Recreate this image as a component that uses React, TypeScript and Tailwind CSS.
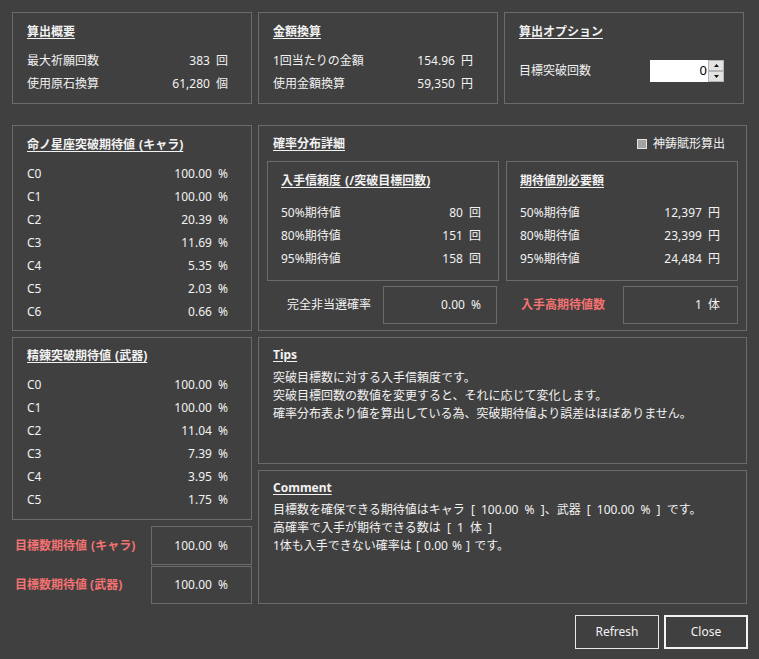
import React from "react";

const FONT = { fontFamily: '"Noto Sans", "Noto Sans CJK JP", sans-serif' };

function Title({ children }: { children: React.ReactNode }) {
  return (
    <div className="h-[16px] leading-[16px] font-bold underline underline-offset-2 decoration-1 whitespace-nowrap [word-spacing:1px]">
      {children}
    </div>
  );
}

function Row({ label, value, red }: { label: string; value: string; red?: boolean }) {
  return (
    <div className="flex h-[23px] items-center justify-between whitespace-nowrap">
      <span className={red ? "text-[#f47272]" : ""}>{label}</span>
      <span>{value}</span>
    </div>
  );
}

const box = "border border-[#6b6b6b]";

export default function App() {
  const chara = [
    ["C0", "100.00 %"],
    ["C1", "100.00 %"],
    ["C2", "20.39 %"],
    ["C3", "11.69 %"],
    ["C4", "5.35 %"],
    ["C5", "2.03 %"],
    ["C6", "0.66 %"],
  ];
  const weapon = [
    ["C0", "100.00 %"],
    ["C1", "100.00 %"],
    ["C2", "11.04 %"],
    ["C3", "7.39 %"],
    ["C4", "3.95 %"],
    ["C5", "1.75 %"],
  ];
  return (
    <div
      className="w-[759px] h-[659px] bg-[#404040] text-[#f2f2f2] text-[12px] leading-[16px] [word-spacing:3px] pl-[12px] pt-[12px] overflow-hidden"
      style={FONT}
    >
      {/* Row 1 */}
      <div className="flex gap-[6px]">
        <div className={`${box} w-[240px] h-[92px] pt-[11px] pl-[14px] pr-[23px]`}>
          <Title>算出概要</Title>
          <div className="mt-[9px]">
            <Row label="最大祈願回数" value="383 回" />
            <Row label="使用原石換算" value="61,280 個" />
          </div>
        </div>
        <div className={`${box} w-[240px] h-[92px] pt-[11px] pl-[14px] pr-[24px]`}>
          <Title>金額換算</Title>
          <div className="mt-[9px]">
            <Row label="1回当たりの金額" value="154.96 円" />
            <Row label="使用金額換算" value="59,350 円" />
          </div>
        </div>
        <div className={`${box} w-[240px] h-[92px] pt-[11px] pl-[14px] pr-[19px]`}>
          <Title>算出オプション</Title>
          <div className="mt-[20px] flex h-[22px] items-center justify-between">
            <span>目標突破回数</span>
            <div className="flex h-[22px] w-[74px] bg-white">
              <div className="flex-1 text-right text-black leading-[20px] text-[13px] pr-[1px]">0</div>
              <div className="flex w-[16px] flex-col">
                <div className="flex h-[11px] items-center justify-center border border-[#b5b5b5] bg-[#e3e3e3]">
                  <svg width="5" height="3" viewBox="0 0 5 3"><path d="M0 3 L2.5 0 L5 3 Z" fill="#111" /></svg>
                </div>
                <div className="flex h-[11px] items-center justify-center border border-[#b5b5b5] bg-[#e3e3e3]">
                  <svg width="5" height="3" viewBox="0 0 5 3"><path d="M0 0 L2.5 3 L5 0 Z" fill="#111" /></svg>
                </div>
              </div>
            </div>
          </div>
        </div>
      </div>

      {/* Row 2 */}
      <div className="mt-[21px] flex gap-[6px]">
        {/* Left column */}
        <div className="flex w-[240px] flex-col">
          <div className={`${box} h-[206px] pt-[11px] pl-[14px] pr-[23px]`}>
            <Title>命ノ星座突破期待値 (キャラ)</Title>
            <div className="mt-[9px]">
              {chara.map(([l, v]) => (
                <Row key={l} label={l} value={v} />
              ))}
            </div>
          </div>
          <div className={`${box} mt-[6px] h-[183px] pt-[10px] pl-[14px] pr-[23px]`}>
            <Title>精錬突破期待値 (武器)</Title>
            <div className="mt-[9px]">
              {weapon.map(([l, v]) => (
                <Row key={l} label={l} value={v} />
              ))}
            </div>
          </div>
          <div className="mt-[6px] flex h-[39px] items-center">
            <span className="w-[139px] pl-[3px] font-bold text-[#f47272] whitespace-nowrap [word-spacing:1px]">目標数期待値 (キャラ)</span>
            <div className={`${box} flex h-[39px] flex-1 items-center justify-end pr-[23px]`}>100.00 %</div>
          </div>
          <div className="mt-[1px] flex h-[38px] items-center">
            <span className="w-[139px] pl-[3px] font-bold text-[#f47272] whitespace-nowrap [word-spacing:0px]">目標数期待値 (武器)</span>
            <div className={`${box} flex h-[38px] flex-1 items-center justify-end pr-[23px]`}>100.00 %</div>
          </div>
        </div>

        {/* Right column */}
        <div className="flex w-[489px] flex-col">
          <div className={`${box} h-[206px] px-[8px] pt-[10px]`}>
            <div className="flex h-[16px] items-center justify-between pl-[6px] pr-[13px]">
              <Title>確率分布詳細</Title>
              <div className="flex items-center gap-[6px]">
                <span className="h-[10px] w-[10px] border border-[#e2e2e2] bg-[#a2a2a2]" />
                <span>神鋳賦形算出</span>
              </div>
            </div>
            <div className="mt-[9px] flex gap-[7px]">
              <div className={`${box} h-[120px] w-[232px] pt-[11px] pl-[13px] pr-[17px]`}>
                <Title>入手信頼度 (/突破目標回数)</Title>
                <div className="mt-[12px]">
                  <Row label="50%期待値" value="80 回" />
                  <Row label="80%期待値" value="151 回" />
                  <Row label="95%期待値" value="158 回" />
                </div>
              </div>
              <div className={`${box} h-[120px] w-[232px] pt-[11px] pl-[13px] pr-[17px]`}>
                <Title>期待値別必要額</Title>
                <div className="mt-[12px]">
                  <Row label="50%期待値" value="12,397 円" />
                  <Row label="80%期待値" value="23,399 円" />
                  <Row label="95%期待値" value="24,484 円" />
                </div>
              </div>
            </div>
            <div className="mt-[5px] flex gap-[7px]">
              <div className="flex h-[38px] w-[232px] items-center pr-[2px]">
                <span className="flex-1 pl-[20px]">完全非当選確率</span>
                <div className={`${box} flex h-[38px] w-[114px] items-center justify-end pr-[15px]`}>0.00 %</div>
              </div>
              <div className="flex h-[38px] w-[232px] items-center">
                <span className="flex-1 pl-[15px] font-bold text-[#f47272]">入手高期待値数</span>
                <div className={`${box} flex h-[38px] w-[115px] items-center justify-end pr-[17px]`}>1 体</div>
              </div>
            </div>
          </div>

          <div className={`${box} mt-[6px] h-[127px] pt-[9px] pl-[14px]`}>
            <Title>Tips</Title>
            <div className="mt-[6px] leading-[18px]">
              <div>突破目標数に対する入手信頼度です。</div>
              <div>突破目標回数の数値を変更すると、それに応じて変化します。</div>
              <div>確率分布表より値を算出している為、突破期待値より誤差はほぼありません。</div>
            </div>
          </div>

          <div className={`${box} mt-[6px] h-[134px] pt-[9px] pl-[14px]`}>
            <Title>Comment</Title>
            <div className="mt-[5px] leading-[18px]">
              <div>目標数を確保できる期待値はキャラ [ 100.00 % ]、武器 [ 100.00 % ] です。</div>
              <div>高確率で入手が期待できる数は [ 1 体 ]</div>
              <div className="[word-spacing:1px]">1体も入手できない確率は [ 0.00 % ] です。</div>
            </div>
          </div>

          <div className="mt-[11px] flex justify-end gap-[5px]">
            <button className="h-[34px] w-[84px] border border-[#e8e8e8] bg-transparent text-[#f2f2f2]">Refresh</button>
            <button className="-mr-[1px] h-[34px] w-[84px] border-2 border-[#f4f4f4] bg-transparent text-[#f2f2f2]">Close</button>
          </div>
        </div>
      </div>
    </div>
  );
}
